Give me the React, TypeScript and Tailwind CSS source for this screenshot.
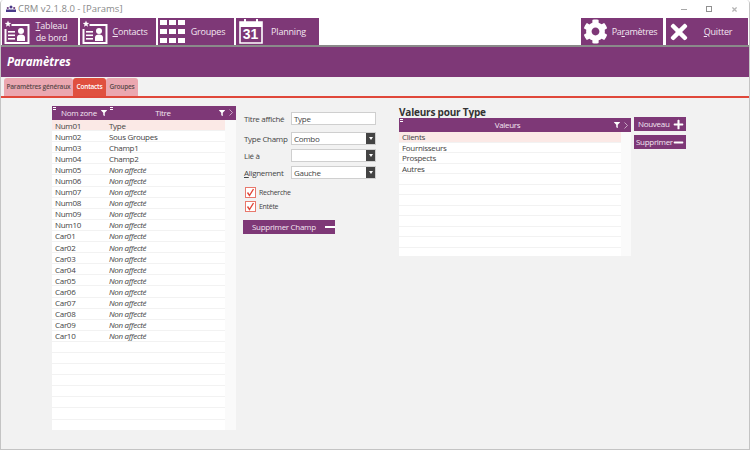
import { FaCog, FaTimes, FaPlus, FaMinus, FaFilter } from "react-icons/fa";

const P = "bg-[#7e3877]";

function Card() {
  return (
    <svg width="26" height="24" viewBox="0 0 26 24" fill="none">
      <path d="M4 0.5l0.9 2.3 2.4 0.1-1.9 1.5 0.7 2.3-2.1-1.3-2 1.3 0.6-2.3L0.7 2.9l2.4-.1z" fill="#fff" />
      <path d="M7.5 5H24.5V23H1.5V9" stroke="#fff" strokeWidth="2" />
      <rect x="4" y="11" width="7" height="1.6" fill="#fff" />
      <rect x="4" y="14.5" width="7" height="1.6" fill="#fff" />
      <rect x="4" y="18" width="7" height="1.6" fill="#fff" />
      <circle cx="17" cy="11" r="3" fill="#fff" />
      <path d="M13 21v-3.5c0-2 1.5-3 4-3s4 1 4 3V21z" fill="#fff" />
    </svg>
  );
}

function Grid() {
  return (
    <div className="grid grid-cols-3 gap-x-[2px] gap-y-[4px] w-[25px]">
      {Array.from({ length: 9 }).map((_, i) => (
        <div key={i} className="h-[5px] bg-white" />
      ))}
    </div>
  );
}

function Calendar() {
  return (
    <div className="relative w-[24px] h-[25px] mt-[-1px]">
      <svg width="24" height="25" viewBox="0 0 24 25" fill="none">
        <path d="M1 3H23V24H1Z" stroke="#fff" strokeWidth="1.6" fill="none" />
        <rect x="1" y="3" width="22" height="5" fill="#fff" />
        <rect x="5" y="0" width="2" height="5" fill="#fff" />
        <rect x="17" y="0" width="2" height="5" fill="#fff" />
      </svg>
      <span className="absolute left-0 right-0 top-[8px] text-center text-[14px] leading-[15px] font-bold text-white font-['Liberation_Sans',sans-serif] tracking-normal">31</span>
    </div>
  );
}

function TopBtn({ w, icon, children, pr }: { w: string; icon: React.ReactNode; children: React.ReactNode; pr: string }) {
  return (
    <div className={`${w} ${pr} h-[27px] ${P} flex items-center text-white pl-[1px]`}>
      <div className="w-[27px] flex justify-center shrink-0">{icon}</div>
      <div className="flex-1 text-center text-[9px] leading-[12px] tracking-[-0.2px] text-[#f3e6f1] whitespace-nowrap">{children}</div>
    </div>
  );
}

function Sort() {
  return (
    <span className="flex flex-col gap-[1px] absolute left-[1px] top-[1px]">
      <span className="block w-[3px] h-[1px] bg-white" />
      <span className="block w-[3px] h-[1px] bg-white" />
    </span>
  );
}

function Chevron() {
  return (
    <svg width="4" height="7" viewBox="0 0 4 7" fill="none" className="shrink-0">
      <path d="M0.5 0.5L3.5 3.5L0.5 6.5" stroke="#d9c2d6" strokeWidth="0.8" />
    </svg>
  );
}

const rowsLeft: [string, string][] = [
  ["Num01", "Type"], ["Num02", "Sous Groupes"], ["Num03", "Champ1"], ["Num04", "Champ2"],
  ...["Num05", "Num06", "Num07", "Num08", "Num09", "Num10", "Car01", "Car02", "Car03", "Car04", "Car05", "Car06", "Car07", "Car08", "Car09", "Car10"].map(
    (n) => [n, "Non affecté"] as [string, string]
  ),
  ...Array.from({ length: 8 }).map(() => ["", ""] as [string, string]),
];

const rowsRight = ["Clients", "Fournisseurs", "Prospects", "Autres", "", "", "", "", "", "", "", ""];

function FormRow({ label, value, combo, extra }: { label: React.ReactNode; value: string; combo?: boolean; extra?: string }) {
  return (
    <div className={`flex items-center h-[13px] ${extra ?? ""}`}>
      <div className="w-[47px] text-[8px] leading-[13px] text-[#444] whitespace-nowrap">{label}</div>
      <div className="w-[85px] h-[13px] bg-white border border-[#cfcfcf] flex items-center pl-[2px] text-[8px] text-[#444]">
        <span className="flex-1">{value}</span>
        {combo && (
          <span className="w-[9px] h-[11px] bg-[#444] flex items-center justify-center">
            <span className="block border-x-[2.5px] border-t-[3px] border-x-transparent border-t-white" />
          </span>
        )}
      </div>
    </div>
  );
}

function Check({ label }: { label: string }) {
  return (
    <div className="flex items-center gap-[3px] h-[11px] ml-[2px]">
      <div className="w-[11px] h-[11px] bg-white border border-[#e8786c] flex items-center justify-center">
        <svg width="9" height="9" viewBox="0 0 9 9" fill="none">
          <path d="M1.5 4.5L3.5 7.5L7.5 1" stroke="#e0483a" strokeWidth="1.4" />
        </svg>
      </div>
      <span className="text-[7px] text-[#444] leading-[11px]">{label}</span>
    </div>
  );
}

export default function App() {
  return (
    <div className="w-[750px] h-[450px] overflow-hidden bg-[#f2f2f2] font-['Open_Sans',sans-serif] tracking-[-0.3px] flex flex-col border-x border-b border-[#c4c4c4] rounded-t-[4px]">
      {/* title bar */}
      <div className="h-[18px] bg-white flex items-center shrink-0 pl-[5px]">
        <svg width="10" height="8" viewBox="0 0 10 8" className="mr-[2px]">
          <circle cx="5" cy="2" r="1.5" fill="#4a3a8a" />
          <circle cx="1.8" cy="3" r="1.1" fill="#6b3a7a" />
          <circle cx="8.2" cy="3" r="1.1" fill="#6b3a7a" />
          <rect x="0" y="4.5" width="10" height="2.5" fill="#4a3a8a" />
        </svg>
        <span className="text-[9.5px] tracking-normal text-[#8a8a8a]">CRM v2.1.8.0 - [Params]</span>
        <div className="ml-auto flex items-center gap-[19px] pr-[11px]">
          <span className="block w-[6px] h-[1px] bg-[#a8a8a8]" />
          <span className="block w-[6px] h-[6px] border border-[#909090]" />
          <FaTimes className="text-[#b5b5b5] w-[7px] h-[7px]" />
        </div>
      </div>

      {/* toolbar */}
      <div className="h-[27px] flex items-center gap-[2px] pl-[1px] pr-[1px] shrink-0 bg-white">
        <TopBtn w="w-[76px]" pr="pr-[5px]" icon={<Card />}><span><u>T</u>ableau<br />de bord</span></TopBtn>
        <TopBtn w="w-[76px]" pr="pr-[4px]" icon={<Card />}><span><u>C</u>ontacts</span></TopBtn>
        <TopBtn w="w-[76px]" pr="pr-[4px]" icon={<Grid />}>Groupes</TopBtn>
        <TopBtn w="w-[83px]" pr="pr-[6px]" icon={<Calendar />}>Planning</TopBtn>
        <div className="ml-auto flex gap-[3px]">
          <div className={`w-[82px] h-[27px] ${P} flex items-center pl-[2px] pr-[2px]`}>
            <FaCog className="text-white w-[25px] h-[25px] shrink-0" />
            <span className="flex-1 text-center text-[9px] tracking-[-0.3px] text-[#f3e6f1]">Pa<u>r</u>amètres</span>
          </div>
          <div className={`w-[82px] h-[27px] ${P} flex items-center pl-[1px] pr-[3px]`}>
            <FaTimes className="text-white w-[24px] h-[24px] shrink-0" />
            <span className="flex-1 text-center text-[9px] tracking-[-0.2px] text-[#f3e6f1]"><u>Q</u>uitter</span>
          </div>
        </div>
      </div>

      {/* header */}
      <div className={`h-[32px] border-t-2 border-[#8a8a8a] ${P} shrink-0 flex items-center pl-[6px]`}>
        <span className="text-white text-[11.5px] tracking-normal font-bold italic">Paramètres</span>
      </div>

      {/* tabs */}
      <div className="h-[19px] pl-[3px] flex items-end shrink-0 border-b-2 border-[#e0483a] box-content">
        <div className="h-[18px] w-[69px] bg-[#eba7b0] rounded-t-[3px] text-[6.5px] tracking-[-0.2px] leading-[18px] text-center font-semibold text-[#5a4a4a] whitespace-nowrap">Paramètres généraux</div>
        <div className="h-[18px] w-[33px] bg-[#e0503f] rounded-t-[3px] text-[6.5px] tracking-[-0.2px] leading-[18px] text-center font-semibold text-white">Contacts</div>
        <div className="h-[18px] w-[32px] bg-[#eba7b0] rounded-t-[3px] text-[6.5px] tracking-[-0.2px] leading-[18px] text-center font-semibold text-[#5a4a4a]">Groupes</div>
      </div>

      {/* content */}
      <div className="flex-1 flex items-start pl-[51px] pt-[7px]">
        {/* left table */}
        <div className="w-[184px] mt-[1px] bg-[#fafafa] shrink-0">
          <div className={`${P} h-[14px] flex items-center text-[8px] leading-[12px] pb-[1px] text-[#f3e6f1] relative`}>
            <div className="w-[57px] relative flex items-center pl-[9px] h-full">
              <Sort />
              <span>Nom zone</span>
              <FaFilter className="text-white w-[6px] h-[6px] ml-[4px]" />
            </div>
            <div className="flex-1 relative flex items-center h-full">
              <Sort />
              <span className="flex-1 text-center pr-[2px]">Titre</span>
              <FaFilter className="text-white w-[6px] h-[6px]" />
              <span className="ml-[4px] mr-[3px] flex"><Chevron /></span>
            </div>
          </div>
          <div className="w-[173px] h-[310px] overflow-hidden">
            {rowsLeft.map(([a, b], i) => (
              <div key={i} className={`h-[11.1px] pt-[1px] flex items-center text-[8px] text-[#444] border-b border-[#f2f2f2] ${i === 0 ? "bg-[#fbe9e6]" : "bg-white"}`}>
                <span className="w-[57px] pl-[3px]">{a}</span>
                <span className={b === "Non affecté" ? "italic" : ""}>{b}</span>
              </div>
            ))}
          </div>
        </div>

        {/* form */}
        <div className="w-[155px] ml-[7px] shrink-0 flex flex-col">
          <div className="flex flex-col gap-[4px] pl-[1px] mt-[7px]">
            <FormRow label="Titre affiché" value="Type" extra="mb-[3px]" />
            <FormRow label="Type Champ" value="Combo" combo />
            <FormRow label="Lié à" value="" combo />
            <FormRow label={<span><u>A</u>lignement</span>} value="Gauche" combo />
          </div>
          <div className="flex flex-col gap-[3px] mt-[8px]">
            <Check label="Recherche" />
            <Check label="Entête" />
          </div>
          <div className={`${P} w-[92px] h-[14px] mt-[8px] flex items-center text-[8px] text-[#f3e6f1] pl-[9px] whitespace-nowrap`}>
            <span>Supprimer Champ</span>
            <span className="block w-[10px] h-[2px] bg-white ml-[9px]" />
          </div>
        </div>

        {/* values */}
        <div className="w-[232px] shrink-0 ml-[1px] mt-[2px]">
          <div className="text-[10px] leading-[11px] font-bold text-[#333] tracking-[-0.2px]">Valeurs pour Type</div>
          <div className="bg-[#fafafa]">
            <div className={`${P} h-[14px] relative flex items-center text-[8px] text-[#f3e6f1]`}>
              <Sort />
              <span className="flex-1 text-center pl-[2px]">Valeurs</span>
              <FaFilter className="text-white w-[6px] h-[6px]" />
              <span className="ml-[4px] mr-[3px] flex"><Chevron /></span>
            </div>
            <div className="w-[222px] h-[124px] overflow-hidden">
              {rowsRight.map((r, i) => (
                <div key={i} className={`h-[10.5px] pt-[1px] flex items-center pl-[3px] text-[8px] text-[#444] border-b border-[#f2f2f2] ${i === 0 ? "bg-[#fbe9e6]" : "bg-white"}`}>
                  {r}
                </div>
              ))}
            </div>
          </div>
        </div>

        {/* buttons */}
        <div className="ml-[3px] mt-[12px] flex flex-col gap-[4px] shrink-0">
          <div className={`${P} w-[52px] h-[14px] flex items-center text-[8px] text-[#f3e6f1] pl-[4px]`}>
            <span>Nouveau</span>
            <FaPlus className="text-white w-[11px] h-[11px] ml-auto mr-[2px]" />
          </div>
          <div className={`${P} w-[52px] h-[14px] flex items-center text-[8px] text-[#f3e6f1] pl-[2px]`}>
            <span>Supprimer</span>
            <FaMinus className="text-white w-[11px] h-[11px] ml-auto mr-[2px]" />
          </div>
        </div>
      </div>
    </div>
  );
}
